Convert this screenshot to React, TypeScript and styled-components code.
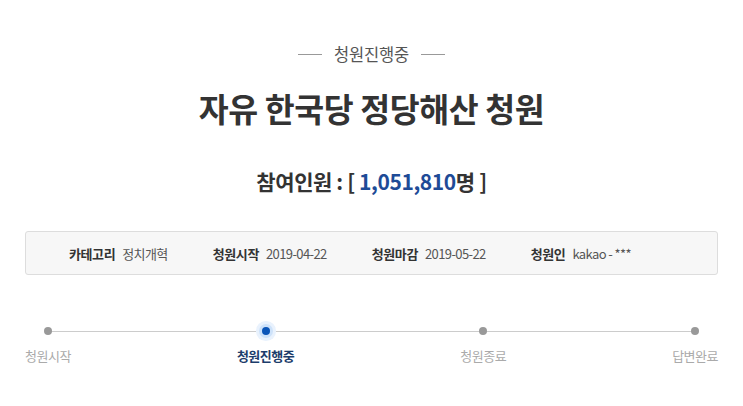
import React from "react";
import styled, { createGlobalStyle } from "styled-components";

const GlobalStyle = createGlobalStyle`
  html, body {
    margin: 0;
    padding: 0;
    background: #fff;
  }
  body {
    font-family: "Noto Sans CJK KR", "Noto Sans", sans-serif;
    color: #333;
  }
`;

const Page = styled.div`
  width: 743px;
  padding: 0 25px;
  box-sizing: border-box;
`;

const Status = styled.div`
  margin-top: 44px;
  display: flex;
  align-items: center;
  justify-content: center;
  gap: 12px;
  height: 20px;
  font-size: 16.5px;
  color: #555;
  letter-spacing: -0.2px;
  &::before,
  &::after {
    content: "";
    width: 24px;
    height: 1px;
    background: #999;
  }
`;

const Title = styled.h1`
  margin: 24px 0 0;
  text-align: center;
  font-size: 32.5px;
  line-height: 40px;
  font-weight: 700;
  color: #333;
  letter-spacing: -0.4px;
`;

const Count = styled.div`
  margin-top: 39px;
  text-align: center;
  font-size: 21px;
  line-height: 28px;
  font-weight: 700;
  color: #333;
  letter-spacing: -0.4px;
`;

const Number = styled.span`
  color: #1e4b97;
`;

const InfoBox = styled.div`
  margin-top: 36px;
  height: 44px;
  box-sizing: border-box;
  border: 1px solid #ddd;
  border-radius: 3px;
  background: #f7f7f7;
  display: flex;
  align-items: center;
  gap: 45px;
  padding-left: 43px;
`;

const InfoItem = styled.div`
  display: flex;
  align-items: baseline;
  gap: 7px;
  font-size: 13px;
  letter-spacing: -0.4px;
`;

const InfoLabel = styled.span`
  font-weight: 700;
  color: #333;
`;

const InfoValue = styled.span`
  color: #555;
  letter-spacing: -0.6px;
`;

const Timeline = styled.div`
  position: relative;
  margin-top: 46px;
  display: flex;
  justify-content: space-between;
  &::before {
    content: "";
    position: absolute;
    top: 10px;
    left: 23px;
    right: 23px;
    height: 1px;
    background: #ccc;
  }
`;

const Step = styled.div`
  position: relative;
  display: flex;
  flex-direction: column;
  align-items: center;
`;

const DotArea = styled.div`
  height: 20px;
  display: flex;
  align-items: center;
  justify-content: center;
`;

const Dot = styled.span<{ $active?: boolean }>`
  display: block;
  width: 8px;
  height: 8px;
  border-radius: 50%;
  background: ${(p) => (p.$active ? "#0a55b8" : "#999")};
  box-shadow: ${(p) =>
    p.$active ? "0 0 0 3px #cde2fa, 0 0 0 6px #e9f2fd" : "none"};
`;

const StepLabel = styled.span<{ $active?: boolean }>`
  margin-top: 5px;
  line-height: 20px;
  font-size: 13px;
  letter-spacing: -0.5px;
  white-space: nowrap;
  font-weight: ${(p) => (p.$active ? 700 : 400)};
  color: ${(p) => (p.$active ? "#1c3d6b" : "#aaa")};
`;

const steps = [
  { label: "청원시작" },
  { label: "청원진행중", active: true },
  { label: "청원종료" },
  { label: "답변완료" },
];

const info = [
  { label: "카테고리", value: "정치개혁" },
  { label: "청원시작", value: "2019-04-22" },
  { label: "청원마감", value: "2019-05-22" },
  { label: "청원인", value: "kakao - ***" },
];

export default function App() {
  return (
    <>
      <GlobalStyle />
      <Page>
        <Status>청원진행중</Status>
        <Title>자유 한국당 정당해산 청원</Title>
        <Count>
          참여인원 : [ <Number>1,051,810</Number>명 ]
        </Count>
        <InfoBox>
          {info.map((i) => (
            <InfoItem key={i.label}>
              <InfoLabel>{i.label}</InfoLabel>
              <InfoValue>{i.value}</InfoValue>
            </InfoItem>
          ))}
        </InfoBox>
        <Timeline>
          {steps.map((s) => (
            <Step key={s.label}>
              <DotArea>
                <Dot $active={s.active} />
              </DotArea>
              <StepLabel $active={s.active}>{s.label}</StepLabel>
            </Step>
          ))}
        </Timeline>
      </Page>
    </>
  );
}
